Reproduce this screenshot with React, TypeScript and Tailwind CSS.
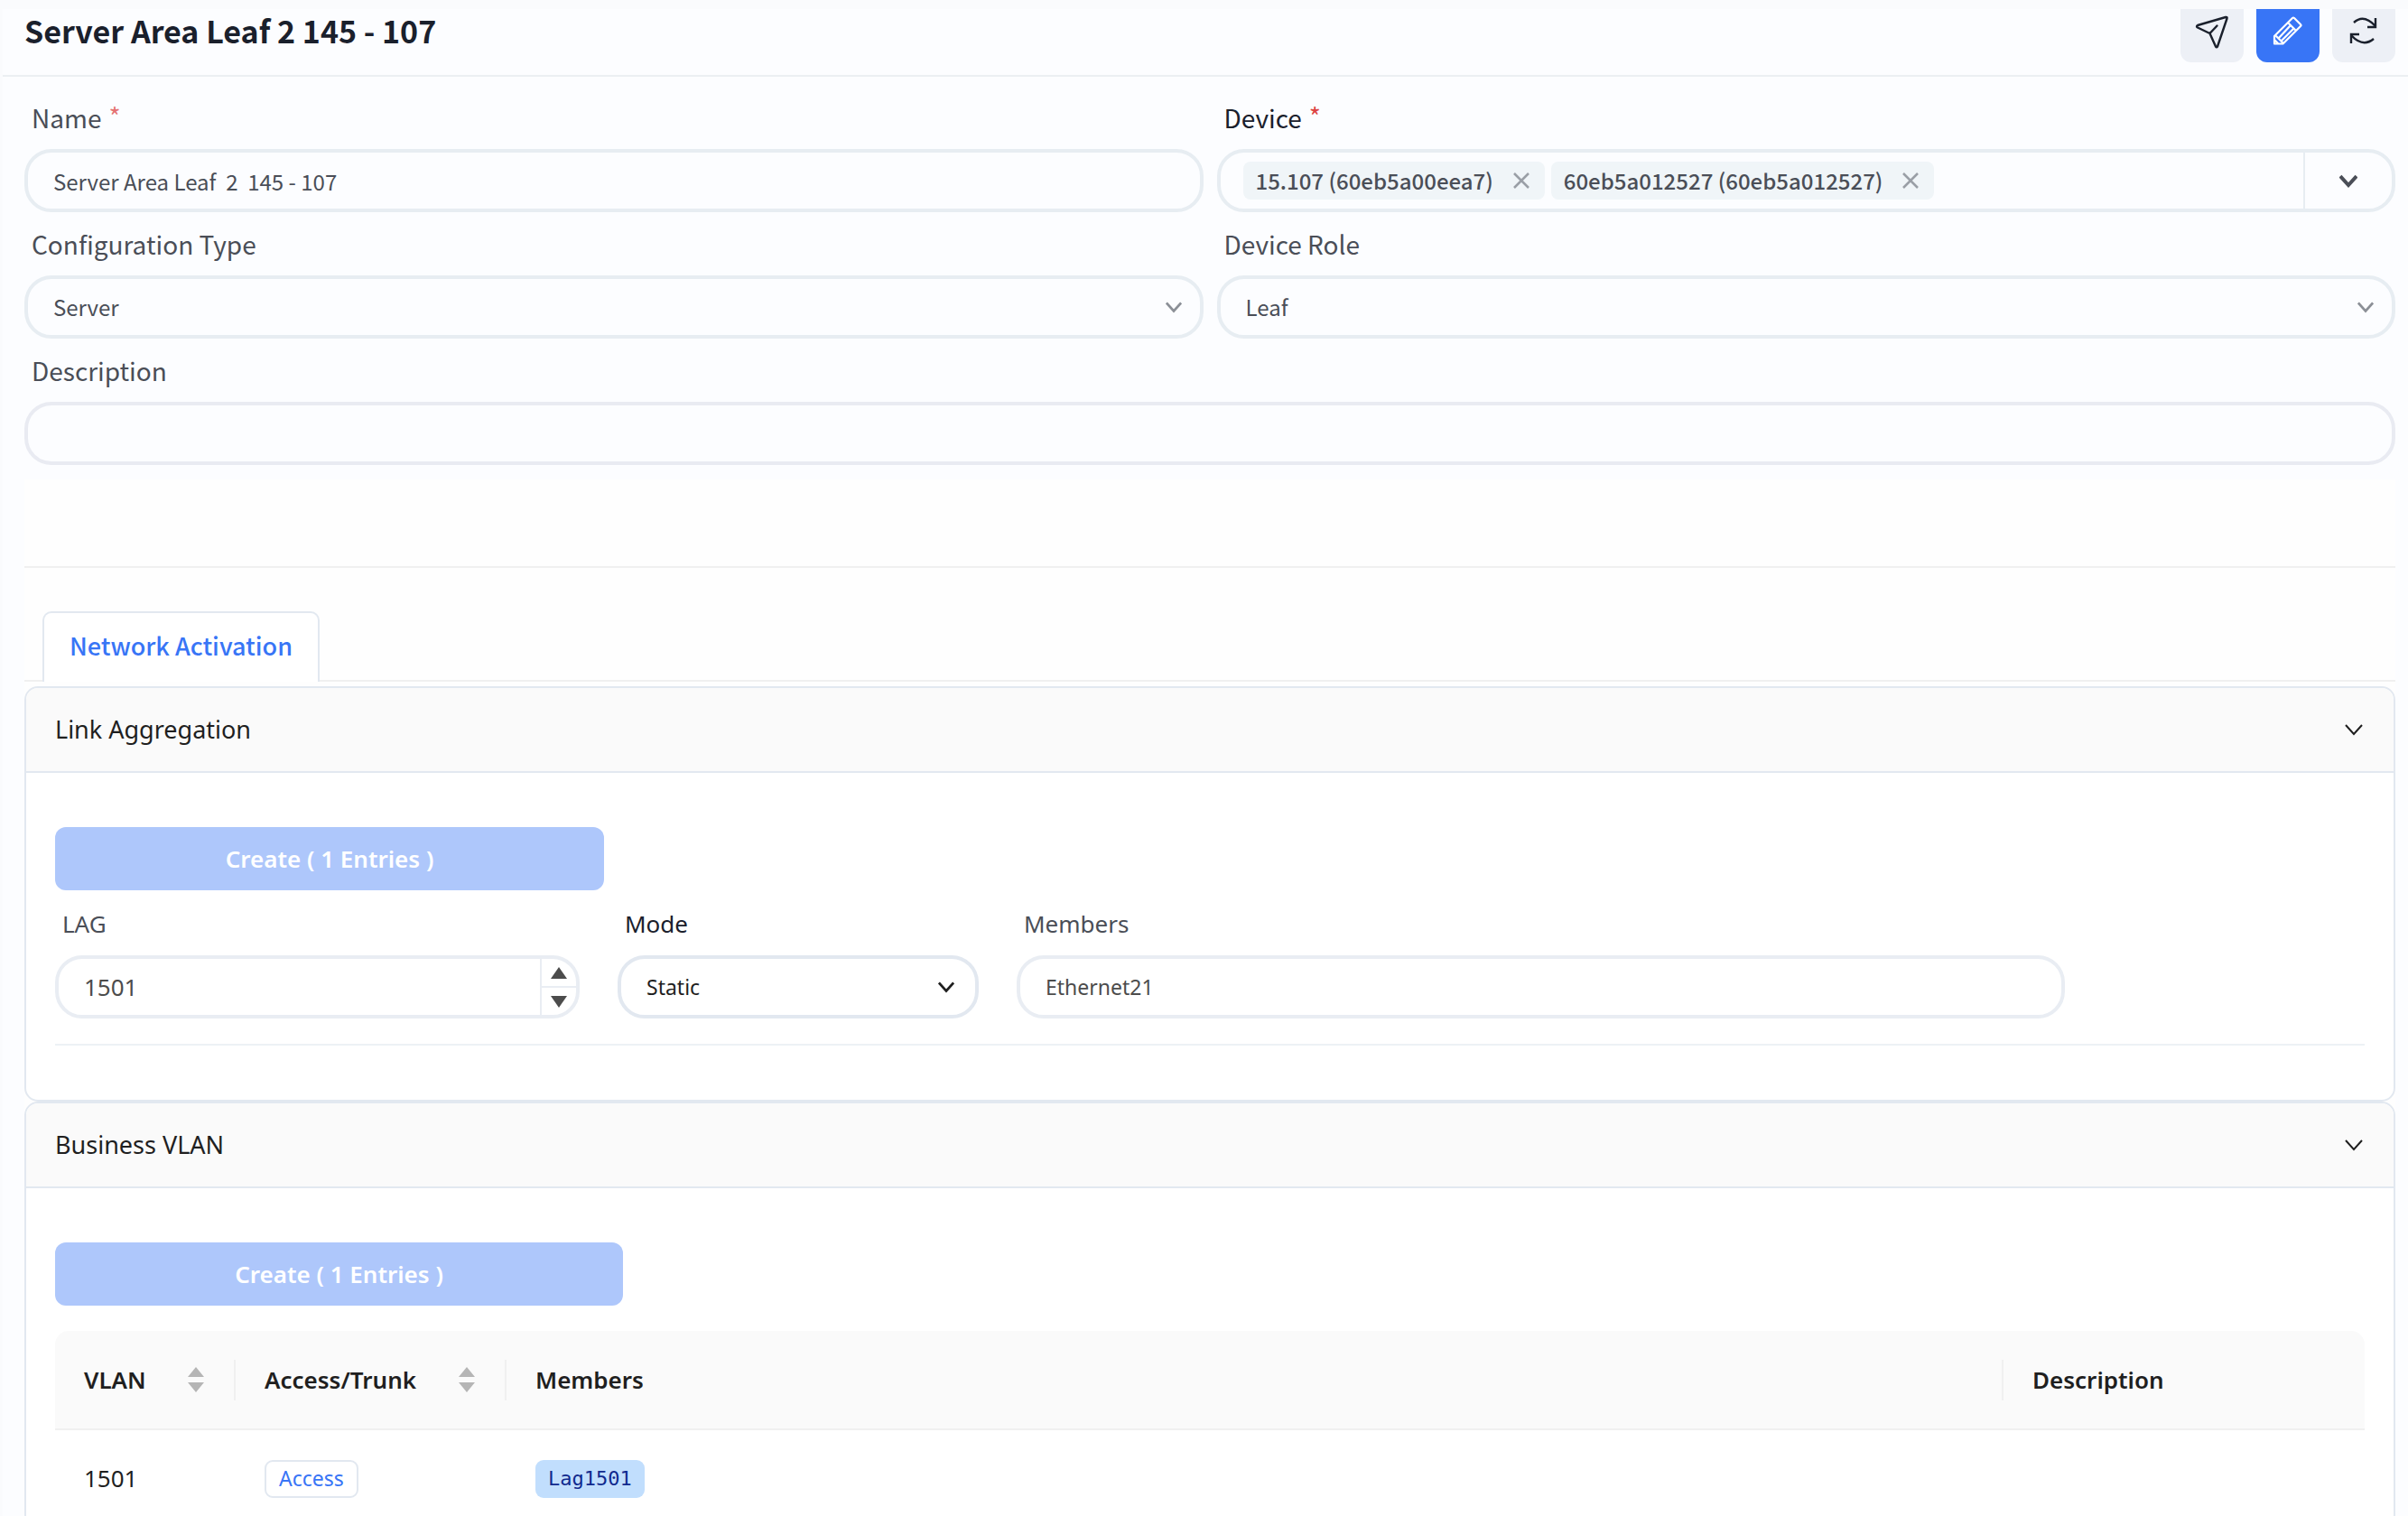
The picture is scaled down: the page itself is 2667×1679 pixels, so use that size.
import { useState, type ReactNode } from 'react';

const inputBase = 'h-[70px] w-full rounded-[30px] border-4 bg-transparent outline-none';

function Chevron({ className, size = 20, stroke = 3 }: { className?: string; size?: number; stroke?: number }) {
  return (
    <svg width={size} height={size} viewBox="0 0 20 20" fill="none" stroke="currentColor" strokeWidth={stroke} className={className}>
      <path d="M1 5l9 10 9-10" />
    </svg>
  );
}

function SendIcon() {
  return (
    <svg width="38" height="38" viewBox="0 0 38 38" fill="none" stroke="currentColor" strokeWidth="2.4" strokeLinejoin="round" strokeLinecap="round">
      <path d="M34 2L3 11Q1 12 3 13.500L16.500 20L23 34.500Q24 36 25 34.500L35.500 3.500Q36 1.500 34 2zM16.500 20l8-8.500" />
    </svg>
  );
}

function PencilIcon() {
  return (
    <svg width="34" height="34" viewBox="0 0 34 34" fill="none" stroke="currentColor" strokeWidth="2.2" strokeLinejoin="round">
      <path d="M2 23L22 3Q23 2 24 3L31 10Q32 11 31 12L11.500 31.500H2zM17 8l9 9M3 22l9 9M20 11L7 25M24 14L10 28M2 27l4 4" />
    </svg>
  );
}

function RefreshIcon() {
  return (
    <svg width="34" height="34" viewBox="0 0 34 34" fill="none" stroke="currentColor" strokeWidth="2.4">
      <path d="M6 8Q17-2 30 12M30 3v10h-9M28 26Q16 36 3 22M3 31V21h9" />
    </svg>
  );
}

function SortArrows() {
  return (
    <svg width="18" height="28" viewBox="0 0 18 28" fill="#b5b5b5">
      <path d="M9 0l9 11H0zM9 28l9-11H0z" />
    </svg>
  );
}

type FieldProps = { id: string; label: string; required?: boolean; dark?: boolean; small?: boolean; children: ReactNode };

function Field({ id, label, required, dark, small, children }: FieldProps) {
  return (
    <div>
      <label htmlFor={id} className={`flex h-[70px] items-center gap-2 pl-2 ${small ? 'text-[26px]' : 'text-[28px]'} ${dark ? 'text-[#1a202c]' : 'text-[#4a4e57]'}`}>
        {label}
        {required && <span className={`self-start pt-3 ${dark ? 'text-[#dd4444]' : 'text-[#e57373]'}`}>*</span>}
      </label>
      {children}
    </div>
  );
}

function SelectField({ id, value }: { id: string; value: string }) {
  return (
    <div className="grid items-center">
      <select id={id} className={`${inputBase} col-start-1 row-start-1 appearance-none border-[#e7edf2] px-7 text-[24px] text-[#4a4e57]`}>
        <option>{value}</option>
      </select>
      <Chevron size={18} className="pointer-events-none col-start-1 row-start-1 mr-6 justify-self-end text-[#8b8f96]" />
    </div>
  );
}

function Tag({ text, onRemove }: { text: string; onRemove: () => void }) {
  return (
    <span className="flex h-[42px] items-center rounded-lg bg-[#f0f5f8] pl-3.5 text-[24px] font-medium text-[#4a4e57]">
      {text}
      <button aria-label={`Remove ${text}`} onClick={onRemove} className="ml-[22px] mr-[17px] cursor-pointer text-[#9a9fa6]">
        <svg width="18" height="18" viewBox="0 0 18 18" stroke="currentColor" strokeWidth="2.500">
          <path d="M1 1l16 16M17 1L1 17" />
        </svg>
      </button>
    </span>
  );
}

function Panel({ title, children }: { title: string; children: ReactNode }) {
  const [open, setOpen] = useState(true);

  return (
    <section className="overflow-hidden rounded-[15px] border-2 border-[#e2e8f0] bg-white font-['Noto_Sans',sans-serif]">
      <button onClick={() => setOpen(!open)} className="flex h-[92px] w-full cursor-pointer items-center justify-between bg-[#fafafa] pl-8 pr-[34px] text-[27px] text-[#1f1f1f]">
        {title}
        <Chevron stroke={2} />
      </button>
      {open && <div className="border-t-2 border-[#e2e8f0] px-8 pt-[60px]">{children}</div>}
    </section>
  );
}

function CreateButton({ width }: { width: string }) {
  return (
    <button disabled className={`h-[70px] rounded-[12px] bg-[#aec7fb] text-[26px] font-semibold text-white ${width}`}>
      Create ( 1 Entries )
    </button>
  );
}

export default function App() {
  const [name, setName] = useState('Server Area Leaf  2  145 - 107');
  const [description, setDescription] = useState('');
  const [devices, setDevices] = useState(['15.107 (60eb5a00eea7)', '60eb5a012527 (60eb5a012527)']);
  const [lag, setLag] = useState(1501);

  return (
    <div className="min-h-screen border-l-3 border-t-10 border-[#fafbfd] bg-[#fcfdff] font-['Noto_Sans_CJK_SC',sans-serif]">
      <header className="flex h-[75px] items-start justify-between border-b-2 border-[#eceff2] pl-6 pr-3.5">
        <h1 className="text-[34px] leading-[48px] font-bold text-[#1a202c]">Server Area Leaf 2 145 - 107</h1>
        <div className="flex gap-3.5">
          <button aria-label="Send" className="flex h-[59px] w-[70px] cursor-pointer items-center justify-center rounded-b-[12px] bg-[#edf0f6] pb-2 text-[#1a202c]"><SendIcon /></button>
          <button aria-label="Edit" className="flex h-[59px] w-[70px] cursor-pointer items-center justify-center rounded-b-[12px] bg-[#3875f6] pb-3 text-white"><PencilIcon /></button>
          <button aria-label="Refresh" className="flex h-[59px] w-[70px] cursor-pointer items-center justify-center rounded-b-[12px] bg-[#edf0f6] pb-3 text-[#1a202c]"><RefreshIcon /></button>
        </div>
      </header>

      <main className="pl-6 pr-3.5">
        <div className="grid grid-cols-2 gap-x-[15px] pt-2.5">
          <Field id="name" label="Name" required>
            <input id="name" value={name} onChange={(e) => setName(e.target.value)} className={`${inputBase} border-[#e7edf2] px-7 text-[24px] text-[#4a4e57]`} />
          </Field>
          <Field id="device" label="Device" required dark>
            <div className="flex h-[70px] rounded-[30px] border-4 border-[#e7edf2] pl-[25px]">
              <div className="flex flex-1 items-center gap-[7px]">
                {devices.map((d) => (
                  <Tag key={d} text={d} onRemove={() => setDevices(devices.filter((x) => x !== d))} />
                ))}
                <input id="device" className="min-w-0 flex-1 bg-transparent outline-none" />
              </div>
              <button aria-label="Show devices" className="flex w-[98px] cursor-pointer items-center justify-center border-l-2 border-[#e7edf2] text-[#4a4e57]">
                <Chevron stroke={4} />
              </button>
            </div>
          </Field>
          <Field id="type" label="Configuration Type">
            <SelectField id="type" value="Server" />
          </Field>
          <Field id="role" label="Device Role">
            <SelectField id="role" value="Leaf" />
          </Field>
          <div className="col-span-2">
            <Field id="description" label="Description">
              <input id="description" value={description} onChange={(e) => setDescription(e.target.value)} className={`${inputBase} border-[#e9ebf2] px-7 text-[24px] text-[#4a4e57]`} />
            </Field>
          </div>
        </div>

        <div className="mt-4 bg-[#fefefe]">
          <div className="h-24" />
          <hr className="border-t-2 border-[#f0f0f0]" />
          <div role="tablist" className="mt-12 mb-[5px] flex">
            <div className="w-5 border-b-2 border-[#f0f0f0]" />
            <button role="tab" aria-selected="true" className="h-[78px] cursor-pointer rounded-t-[10px] border-2 border-b-0 border-[#e2e8f0] bg-white px-7 pb-1 text-[27px] font-medium text-[#3875f6]">
              Network Activation
            </button>
            <div className="flex-1 border-b-2 border-[#f0f0f0]" />
          </div>

          <Panel title="Link Aggregation">
            <CreateButton width="w-[608px]" />
            <div className="grid grid-cols-[581fr_400fr_1161fr_290fr] gap-x-[42px] border-b-2 border-[#edf1f5] pt-0.5 pb-7">
              <Field id="lag" label="LAG" small>
                <div className="flex h-[70px] overflow-hidden rounded-[30px] border-4 border-[#e9edf3]">
                  <input id="lag" inputMode="numeric" value={lag} onChange={(e) => setLag(Number(e.target.value))} className="min-w-0 flex-1 bg-transparent px-7 text-[26px] text-[#4c4c4c] outline-none" />
                  <div className="flex w-10 flex-col border-l-2 border-[#e9edf3] text-[#4c4c4c]">
                    <button aria-label="Increase" onClick={() => setLag(lag + 1)} className="flex flex-1 cursor-pointer items-center justify-center border-b-2 border-[#e9edf3]">
                      <svg width="18" height="13" viewBox="0 0 18 13" fill="currentColor"><path d="M9 0l9 13H0z" /></svg>
                    </button>
                    <button aria-label="Decrease" onClick={() => setLag(lag - 1)} className="flex flex-1 cursor-pointer items-center justify-center">
                      <svg width="18" height="13" viewBox="0 0 18 13" fill="currentColor"><path d="M9 13l9-13H0z" /></svg>
                    </button>
                  </div>
                </div>
              </Field>
              <Field id="mode" label="Mode" dark small>
                <div className="grid items-center">
                  <select id="mode" className={`${inputBase} col-start-1 row-start-1 appearance-none border-[#e2e8f0] px-7 text-[23px] text-[#1f1f1f]`}>
                    <option>Static</option>
                  </select>
                  <Chevron size={18} className="pointer-events-none col-start-1 row-start-1 mr-[27px] justify-self-end text-[#1f1f1f]" />
                </div>
              </Field>
              <Field id="members" label="Members" small>
                <input id="members" defaultValue="Ethernet21" className={`${inputBase} border-[#e9edf3] px-7 text-[23px] text-[#4c4c4c]`} />
              </Field>
            </div>
            <div className="h-[60px]" />
          </Panel>

          <Panel title="Business VLAN">
            <CreateButton width="w-[629px]" />
            <table className="mt-7 w-full table-fixed border-separate border-spacing-0 text-left text-[26px] text-[#1f1f1f]">
              <colgroup>
                <col className="w-[200px]" />
                <col className="w-[300px]" />
                <col />
                <col className="w-[400px]" />
              </colgroup>
              <thead>
                <tr className="h-[110px] bg-[#fafafa]">
                  <th className="rounded-tl-[15px] border-b-2 border-[#f0f0f0] pl-8 font-semibold">
                    <div className="flex h-[45px] items-center justify-between border-r-2 border-[#f0f0f0] pr-[33px]">VLAN <SortArrows /></div>
                  </th>
                  <th className="border-b-2 border-[#f0f0f0] pl-8 font-semibold">
                    <div className="flex h-[45px] items-center justify-between border-r-2 border-[#f0f0f0] pr-[33px]">Access/Trunk <SortArrows /></div>
                  </th>
                  <th className="border-b-2 border-[#f0f0f0] pl-8 font-semibold">
                    <div className="flex h-[45px] items-center border-r-2 border-[#f0f0f0]">Members</div>
                  </th>
                  <th className="rounded-tr-[15px] border-b-2 border-[#f0f0f0] pl-8 font-semibold">Description</th>
                </tr>
              </thead>
              <tbody>
                <tr className="h-[107px]">
                  <td className="pl-8">1501</td>
                  <td className="pl-8">
                    <span className="flex h-[42px] w-fit items-center rounded-[9px] border-2 border-[#e2e8f0] px-3.5 text-[23px] text-[#3875f6]">Access</span>
                  </td>
                  <td className="pl-8">
                    <span className="flex h-[42px] w-fit items-center rounded-[9px] bg-[#c1defd] px-3.5 font-['DejaVu_Sans_Mono',monospace] text-[22px] text-[#10298e]">Lag1501</span>
                  </td>
                  <td />
                </tr>
              </tbody>
            </table>
          </Panel>
        </div>
      </main>
    </div>
  );
}
